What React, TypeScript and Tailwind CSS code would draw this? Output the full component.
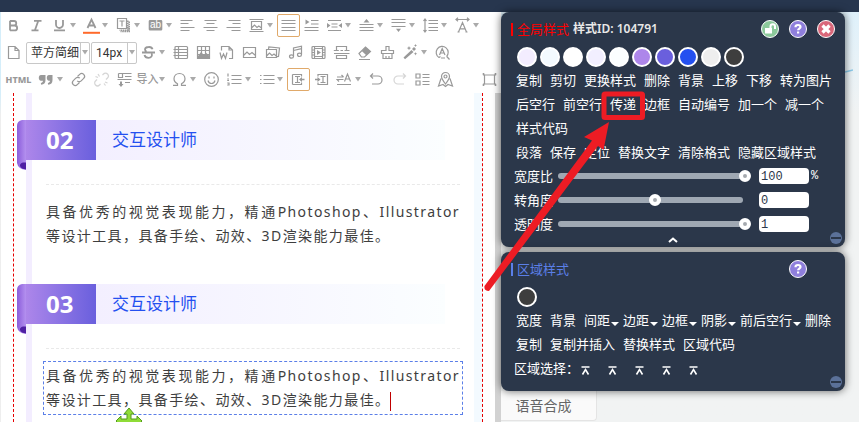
import { useState, type ReactNode } from "react";
import { clsx } from "clsx";

interface Tool {
  label: string;
  d?: string;
  fill?: string;
  text?: string;
  node?: ReactNode;
  menu?: boolean;
  active?: boolean;
  dim?: boolean;
  bold?: boolean;
  wide?: boolean;
  end?: boolean;
}

const picture = "M2.5 3.5h12v10h-12zM2.5 11.5l3.5-3.5 2.5 2.5 2.5-2 3.5 3";

const rowOne: Tool[] = [
  {
    label: "加粗",
    bold: true,
    d: "M5 3.8v9.7M5 4h4a2.2 2.2 0 0 1 0 4.5H5h4.7a2.4 2.4 0 0 1 0 4.9H5",
  },
  { label: "斜体", bold: true, d: "M6 3.8h7.5M3.5 13.3h7M10.2 4l-3.2 9" },
  {
    label: "下划线",
    bold: true,
    menu: true,
    d: "M5 3v4.5a3.5 3.5 0 0 0 7 0V3M3 13.3h11",
  },
  {
    label: "字体颜色",
    bold: true,
    menu: true,
    d: "M4.5 11l4-8.5 4 8.5M6 8.5h5",
    node: <path d="M0 15.8h17" stroke="#ff6a2b" strokeWidth="2" />,
  },
  {
    label: "文字阴影",
    menu: true,
    d: "M2.5 1.5h9v10h-9zM4.5 4h5M7 4v5.5",
    node: (
      <path
        d="M12.8 3.5v9.7H4.5M14.2 4.5v10H5.5"
        strokeWidth="1.6"
        strokeDasharray="1.6 .6"
      />
    ),
  },
  {
    label: "背景色",
    menu: true,
    fill: "M3 3h11a1.3 1.3 0 0 1 1.3 1.3v8a1.3 1.3 0 0 1-1.3 1.3H3a1.3 1.3 0 0 1-1.3-1.3v-8A1.3 1.3 0 0 1 3 3z",
    node: (
      <text
        x="8.5"
        y="11.3"
        textAnchor="middle"
        fontSize="10"
        fill="#fff"
        stroke="none"
        fontFamily="Liberation Sans"
      >
        ab
      </text>
    ),
  },
  { label: "左对齐", d: "M1.5 3.5h12M1.5 6.5h8M1.5 10.5h14M1.5 13.5h9" },
  { label: "居中", d: "M2.5 3.5h12M4.5 6.5h8M1.5 10.5h14M4.5 13.5h8" },
  { label: "右对齐", d: "M3.5 3.5h12M7.5 6.5h8M1.5 10.5h14M6.5 13.5h9" },
  {
    label: "图片对齐",
    menu: true,
    d: "M1.5 2.5h14M1.5 14.5h14M3.5 4.5h10v8h-10zM3.5 11l3-3 2.5 2.5 1.8-1.5 2.7 2",
  },
  {
    label: "两端对齐",
    active: true,
    d: "M1.5 3.5h14M1.5 6.5h14M1.5 10.5h14M1.5 13.5h14",
  },
  {
    label: "首行缩进",
    d: "M8 3.5h7.5M8 7h7.5M1.5 10.5h14M1.5 13.5h14",
    fill: "M2.5 2.5l4 2.5-4 2.5z",
  },
  {
    label: "两侧缩进",
    menu: true,
    d: "M2 3.5h13M5.5 7h6M5.5 10h6M2 13.5h13",
    fill: "M1 6l3.5 2.5L1 11zM16 6l-3.5 2.5L16 11z",
  },
  {
    label: "段前距",
    menu: true,
    d: "M1.5 7.5h14M1.5 10.5h14M1.5 13.5h14",
    fill: "M8.5 2l3 3.5h-6z",
  },
  {
    label: "段后距",
    menu: true,
    d: "M1.5 2.5h14M1.5 5.5h14M1.5 9.5h14",
    fill: "M8.5 15l2.5-3.2H6z",
  },
  {
    label: "行间距",
    menu: true,
    d: "M3 2.5v12M1.5 4L3 2l1.5 2M1.5 13L3 15l1.5-2M6.5 3.5h9.5M6.5 6.5h9.5M6.5 10.5h9.5M6.5 13.5h9.5",
  },
  {
    label: "字间距",
    menu: true,
    d: "M2 2.5h13M4 .8L2 2.5l2 1.7M13 .8l2 1.7-2 1.7M4.5 15l4-9.5 4 9.5M6 11.8h5M3.5 15h2M11.5 15h2",
  },
];

const rowTwo: Tool[] = [
  {
    label: "删除线",
    bold: true,
    menu: true,
    d: "M12.5 5.3A3.6 2.8 0 0 0 8.6 3C6 3 5 4.4 5 5.6c0 1 .6 1.7 1.6 2.1M2 8.5h13M11.5 9.5c1.5 2.3-.5 4.3-3 4.3-2.2 0-3.6-1-4-2.8",
  },
  {
    label: "表格",
    d: "M4 2.5h10.500a1 1 0 0 1 1 1v10a1 1 0 0 1-1 1H4a1 1 0 0 1-1-1v-10a1 1 0 0 1 1-1zM1.500 5.500h14M1.500 8.500h14M1.500 11.500h14M6.500 2.500v12",
  },
  {
    label: "数据图表",
    d: "M2.5 2.5h12v12h-12zM2.5 6.5h12M2.5 10.5h12M6.5 2.5v12M10.5 2.5v12",
    fill: "M3 14.5v-2.500l3-4 3 3 2.500-2 3 3v2.500z",
  },
  {
    label: "导入文档",
    d: "M3.5 6.5v-4h7.5l3.5 3.5v8.5H11M11 2.5V6h3.5M2 8.5l1.5 6 2-4.5 2 4.5 1.5-6",
  },
  { label: "图片", d: picture },
  {
    label: "多图",
    d: "M2.5 5.5h10v8h-10zM2.5 12l3-3 2.5 2.5 2-1.5 2.5 2.2M4.5 5.5l.3-2.5 10.7 1-1 8.5-2 .2",
  },
  {
    label: "音乐",
    d: "M6.5 12.5V4l8-1.8v8.3M6.5 6.5l8-1.8M6.5 12.5a2 1.7 0 1 1-4 0 2 1.7 0 0 1 4 0zM14.5 10.8a2 1.7 0 1 1-4 0 2 1.7 0 0 1 4 0z",
  },
  {
    label: "视频",
    d: "M3 2.5h11a1 1 0 0 1 1 1v10a1 1 0 0 1-1 1H3a1 1 0 0 1-1-1v-10a1 1 0 0 1 1-1zM4.5 2.5v12M12.5 2.5v12M4.5 4.5h8M4.5 12.5h8M2 6h2.5M2 8.5h2.5M2 11h2.5M12.5 6H15M12.5 8.5H15M12.5 11H15",
    fill: "M7 6l4 2.5L7 11z",
  },
  {
    label: "分隔线",
    d: "M3.5 6V2.5h10V6M.8 6.5h5M7.500 6.500h2.500M11.500 6.500h5M1 9.500h15.500M3.500 14.500v-3h10v3z",
  },
  {
    label: "橡皮擦",
    d: "M3 9.5l6.5-6.5 5 4.5-6 5.5H5.5zM3 15.5h11",
    fill: "M5.8 7L9.5 3l5 4.5-4 4z",
  },
  {
    label: "格式刷",
    d: "M7 6.5V2.5h3v4h4.5v3h-12v-3zM4 9.5v5h9v-5M7 14.5v-2.5M10 14.5v-2.5",
  },
  {
    label: "魔法棒",
    menu: true,
    fill: "M1.5 13.5L9.5 6l2 2-8.5 7.3zM10 5l2-2 2 2-2 2zM7 2l.7 1.5L9.2 4l-1.5.7L7 6.2l-.7-1.5L4.8 4l1.5-.5zM13.5 8l.5 1.3 1.3.5-1.3.5-.5 1.3-.5-1.3-1.3-.5 1.3-.5zM13.5 0l.5 1 1 .5-1 .5-.5 1-.5-1-1-.5 1-.5z",
  },
  {
    label: "查找替换",
    d: "M5 13.5A6 6 0 1 1 12.5 12.6M12.8 12.5l2.7 3M5 13.5l1.5-1M7 14h4M5.5 11L8.2 4.5 11 11M6.5 9h3.5",
  },
];

const rowThree: Tool[] = [
  { label: "HTML", text: "HTML", wide: true },
  {
    label: "引用",
    menu: true,
    fill: "M3 4h4.5v5c0 3-1.5 4.5-4.3 4.7l-.4-1.7c1.3-.3 2-.8 2.2-2.2H3c-1.5 0-2.2-1.4-2.2-3S1.5 4 3 4zM11 4h3.5v5c0 3-1.5 4.5-4.3 4.7l-.4-1.7c1.3-.3 2-.8 2.2-2.2H11c-1.5 0-2.2-1.4-2.2-3S9.5 4 11 4z",
  },
  {
    label: "链接",
    d: "M7.5 5.5l2.2-2.2a2.8 2.8 0 0 1 4 4l-2.5 2.5a2.8 2.8 0 0 1-4 0M9.5 11.5l-2.2 2.2a2.8 2.8 0 0 1-4-4l2.5-2.5a2.8 2.8 0 0 1 4 0",
  },
  {
    label: "取消链接",
    dim: true,
    d: "M9.5 4l1-1a2.8 2.8 0 0 1 4 4l-1.5 1.5M7.5 13l-1 1a2.8 2.8 0 0 1-4-4L4 8.5M5 3l1.5 2.5M2.5 5.5L5 6.5M12 11l2.5 1M11 12.5l1.5 2",
  },
  {
    label: "段落",
    d: "M2.500 2.500h13M2.500 2.500v4h4v-4M9 5.500h6.500M1.500 8.500h14M9 11.500h5",
    fill: "M5 16l-2.5-3H4v-2.5h2V13h1.5z",
  },
  { label: "导入", text: "导入", menu: true },
  {
    label: "特殊字符",
    menu: true,
    d: "M2 14.3h4.5v-1.5C4 11.5 3 10 3 7.8 3 4.5 5.4 2.5 8.5 2.5s5.5 2 5.5 5.3c0 2.2-1 3.7-3.5 5v1.5H15",
  },
  {
    label: "表情",
    d: "M15.3 8.5a6.8 6.8 0 1 1-13.6 0 6.8 6.8 0 0 1 13.6 0zM5 9.5c.5 2 1.7 3 3.5 3s3-1 3.5-3M6 5.5v2M11 5.5v2",
  },
  {
    label: "有序列表",
    menu: true,
    d: "M5.5 4.5h10M5.5 8.5h10M5.5 12.5h10M2 2.5v3M1.2 8h1.8M1.2 9.5h1.8M1.2 12h1.8v2H1.2",
  },
  {
    label: "无序列表",
    menu: true,
    d: "M5.5 4.5h11M5.5 8.5h11M5.5 12.5h11M2 4.5h1.5M2 8.5h1.5M2 12.5h1.5",
  },
  {
    label: "左侧插入",
    active: true,
    d: "M2.5 3.5v10M2.5 3.5h9v2M2.5 13.5h9v-2M5 5.5h5M5 11.5h5M7.5 5.500v6",
    fill: "M9 8.500l3-2.500v1.700h2.500v1.600H12V11z",
  },
  {
    label: "右侧插入",
    d: "M14.5 3v11M5 5.5v-2h9.500M5 11.500v2h9.500M7.500 5.500h5M7.500 11.500h5M10 5.500v6",
    fill: "M7.5 8.5L4.5 6v1.7H2v1.6h2.5V11z",
  },
  {
    label: "样式转换",
    menu: true,
    d: "M1 6h6.5M5.5 4l2 2M7.5 8.5H1l2 2M8.5 10.5l3-7.5 3 7.5M9.8 8h3.5M1 13.5h14",
  },
  {
    label: "撤销",
    d: "M5 2.5L2.5 5 5 7.5M2.5 5h7.5a4 4 0 0 1 0 8H4",
  },
  {
    label: "重做",
    dim: true,
    d: "M12 2.5L14.5 5 12 7.5M14.5 5H7a4 4 0 0 0 0 8h6",
  },
  {
    label: "目录",
    d: "M2 3h4v4H2zM2 10h4v4H2zM8.5 3.5h7M8.5 6.5h7M8.5 10.5h7M8.5 13.5h7",
  },
  {
    label: "地图",
    d: "M8.5 13C6 9.8 4.5 7.8 4.5 5.5a4 4 0 0 1 8 0c0 2.3-1.5 4.3-4 7.5zM10 5.5a1.5 1.5 0 1 1-3 0 1.5 1.5 0 0 1 3 0zM4 7.5l-2.5 7.5 4.5-1.5 2.5 2 2.5-2 4.5 1.5L13 7.5",
  },
  {
    label: "全屏",
    end: true,
    d: "M3.5 4h10v9h-10zM1.5 3h2M2.5 2v2.5M13.5 3h2M14.5 2v2.5M1.5 14h2M2.5 12.5V15M13.5 14h2M14.5 12.5V15",
  },
];

const Triangle = () => (
  <svg width="7" height="5" viewBox="0 0 7 5" aria-hidden="true">
    <path d="M0 0h6L3 4.500z" fill="#aaa" />
  </svg>
);

const ToolButton = ({ tool }: { tool: Tool }) => (
  <button
    type="button"
    aria-label={tool.label}
    className={clsx(
      "flex h-[23px] shrink-0 items-center text-[#999]",
      tool.menu && "w-8",
      tool.wide && "w-[33px] justify-center",
      !tool.menu && !tool.wide && "w-[23px] justify-center",
      tool.active && "rounded-xs outline outline-[#e0a96a] -outline-offset-1",
      tool.dim && "opacity-40",
      tool.end && "ml-auto",
    )}
  >
    {tool.text ? (
      <span
        className={clsx(
          "text-center",
          tool.wide
            ? "text-[9px] font-extrabold"
            : "w-[23px] text-[11px] font-medium",
        )}
      >
        {tool.text}
      </span>
    ) : (
      <svg
        className={clsx("shrink-0", tool.menu && "mr-0.5 ml-[3px]")}
        width="17"
        height="17"
        viewBox="0 0 17 17"
        fill="none"
        stroke="currentColor"
        strokeWidth={tool.bold ? 1.8 : 1.2}
        aria-hidden="true"
      >
        {tool.fill && <path d={tool.fill} fill="currentColor" stroke="none" />}
        {tool.d && <path d={tool.d} />}
        {tool.node}
      </svg>
    )}
    {tool.menu && <Triangle />}
  </button>
);

interface PickerProps {
  label: string;
  value: string;
  className: string;
}

const Picker = ({ label, value, className }: PickerProps) => (
  <label
    className={clsx(
      "flex h-[22px] shrink-0 items-center rounded-xs border border-[#c8c8c8]",
      className,
    )}
  >
    <span className="sr-only">{label}</span>
    <select className="h-5 min-w-0 flex-1 appearance-none pl-1 font-['Roboto','Noto_Sans_CJK_SC',sans-serif] text-xs leading-5 text-[#333]">
      <option>{value}</option>
    </select>
    <span className="flex h-full w-[9px] items-center justify-center border-l border-[#c8c8c8]">
      <Triangle />
    </span>
  </label>
);

const Toolbar = () => (
  <div className="bg-white pl-px">
    <div className="flex h-[27px] items-center">
      {rowOne.map((tool) => (
        <ToolButton key={tool.label} tool={tool} />
      ))}
    </div>
    <div className="flex h-[27px] items-center">
      <ToolButton
        tool={{ label: "新建", d: "M3.5 2.5h6.5l4 4v8H3.5zM10 2.5v4h4" }}
      />
      <Picker label="字体" value="苹方简细" className="ml-px w-16" />
      <Picker label="字号" value="14px" className="ml-px w-[46px]" />
      {rowTwo.map((tool) => (
        <ToolButton key={tool.label} tool={tool} />
      ))}
    </div>
    <div className="flex h-[27px] items-center">
      {rowThree.map((tool) => (
        <ToolButton key={tool.label} tool={tool} />
      ))}
    </div>
  </div>
);

const MoveHandle = () => (
  <svg
    className="absolute top-[45px] left-[71px]"
    width="28"
    height="28"
    viewBox="0 0 28 28"
    aria-hidden="true"
  >
    <path
      d="M14 1l5 6h-3v5h6V9l5 5-5 5v-3h-6v6h3l-5 5-5-5h3v-6H6v3l-5-5 5-5v3h6V7H9z"
      fill="#8fdc38"
      stroke="#549a1c"
    />
  </svg>
);

interface SectionProps {
  id: string;
  no: string;
  title: string;
  selected?: boolean;
}

const Section = ({ id, no, title, selected }: SectionProps) => (
  <section>
    <div className="relative mr-[29px] -ml-1.5 flex h-10">
      <svg
        className="absolute top-0 -left-[9px]"
        width="9"
        height="50"
        viewBox="0 0 9 50"
        aria-hidden="true"
      >
        <defs>
          <linearGradient id={id}>
            <stop offset="0" stopColor="#8b5cdb" />
            <stop offset="1" stopColor="#b491ef" />
          </linearGradient>
        </defs>
        <path d="M9 0H5Q0 1 0 6v37q1 6 9 7z" fill={`url(#${id})`} />
        <path d="M9 42.5H6q-3.5 1-3 3.5 1 3 6 3.5z" fill="#4f1fa3" />
      </svg>
      <div className="flex w-[70px] items-center bg-linear-to-r from-[#ad86ea] to-[#6a5fdd] pl-5 text-2xl font-bold text-white">
        {no}
      </div>
      <h2 className="flex flex-1 items-center bg-linear-to-r from-[#f3efff] to-[#fbfeff] pl-4 text-[17px] text-[#2450f0]">
        {title}
      </h2>
    </div>
    <hr className="mx-3.5 mt-6 border-dashed border-[#e9e9e9]" />
    <div
      className={clsx(
        "relative mx-[11px] mt-3 border border-dashed p-0.5",
        selected ? "border-[#5b7fe8]" : "border-transparent",
      )}
    >
      <p className="text-sm leading-6 tracking-widest text-[#3e3e3e]">
        <span className="block [text-align-last:justify]">
          具备优秀的视觉表现能力，精通Photoshop、Illustrator
        </span>
        等设计工具，具备手绘、动效、3D渲染能力最佳。
        {selected && (
          <span className="inline-block h-[19px] w-px bg-[#c00000] align-middle" />
        )}
      </p>
      {selected && <MoveHandle />}
    </div>
  </section>
);

const swatches = [
  "bg-[#f3edff]",
  "bg-[#f3faff]",
  "bg-white",
  "bg-[#f2efff]",
  "bg-[#fbfeff]",
  "bg-[#ad86ea]",
  "bg-[#6a5fdd]",
  "bg-[#2450f0]",
  "bg-[#eeeeee]",
  "bg-[#3e3e3e]",
];

const Swatch = ({ color }: { color: string }) => (
  <button
    type="button"
    aria-label="颜色"
    className={clsx("size-5 rounded-full border-2 border-white", color)}
  />
);

interface RoundButtonProps {
  label: string;
  color: string;
  children: ReactNode;
}

const RoundButton = ({ label, color, children }: RoundButtonProps) => (
  <button
    type="button"
    aria-label={label}
    className={clsx(
      "flex size-[18px] items-center justify-center rounded-full border border-white text-white",
      color,
    )}
  >
    <svg
      width="16"
      height="16"
      viewBox="0 0 16 16"
      fill="none"
      stroke="currentColor"
      aria-hidden="true"
    >
      {children}
    </svg>
  </button>
);

const HelpButton = () => (
  <RoundButton label="帮助" color="bg-[#8f7fdc]">
    <path
      d="M5.5 6.2C5.5 4.5 6.6 4 8 4s2.5.7 2.5 2c0 1.6-2.4 1.6-2.4 3.2"
      strokeWidth="2.2"
    />
    <path d="M7 10.5h2.2v2H7z" fill="currentColor" stroke="none" />
  </RoundButton>
);

const Panel = ({ children }: { children: ReactNode }) => (
  <section className="rounded-lg bg-[#2b374a] text-[13px] leading-6 text-white shadow-[0_0_8px_rgba(0,0,0,0.6)]">
    {children}
  </section>
);

const PanelFooter = ({ collapsible }: { collapsible?: boolean }) => (
  <div className="relative flex h-[11px] items-center justify-center">
    {collapsible && (
      <button
        type="button"
        aria-label="收起"
        className="flex h-[11px] items-start"
      >
        <svg width="10" height="8" viewBox="0 0 10 8" aria-hidden="true">
          <path d="M1 6l4-3.500L9 6" fill="none" stroke="#fff" strokeWidth="2" />
        </svg>
      </button>
    )}
    <button
      type="button"
      aria-label="最小化"
      className="absolute right-[3px] bottom-[3px] flex size-3 items-center justify-center rounded-full bg-[#5b7199]"
    >
      <span className="h-0.5 w-2.5 bg-[#2b374a]" />
    </button>
  </div>
);

const Actions = ({ items }: { items: string[] }) => (
  <div className="flex flex-wrap gap-x-2 pr-2 pl-[15px]">
    {items.map((item) => (
      <button key={item} type="button" className="h-6">
        {item}
      </button>
    ))}
  </div>
);

interface SliderProps {
  id: string;
  label: string;
  min: number;
  max: number;
  step: number;
  initial: number;
  unit?: string;
}

const Slider = ({ id, label, min, max, step, initial, unit }: SliderProps) => {
  const [value, setValue] = useState(initial);

  return (
    <div className="flex h-6 items-center pl-[13px]">
      <label htmlFor={id} className="w-11 shrink-0">
        {label}
      </label>
      <div className="flex h-1.5 w-[185px] items-center rounded-full bg-[#9fa8b3]">
        <input
          type="range"
          aria-label={label}
          min={min}
          max={max}
          step={step}
          value={value}
          onChange={(e) => setValue(Number(e.target.value))}
          className="h-3 w-[193px] shrink-0 appearance-none bg-transparent [&::-webkit-slider-thumb]:size-3 [&::-webkit-slider-thumb]:appearance-none [&::-webkit-slider-thumb]:rounded-full [&::-webkit-slider-thumb]:border-4 [&::-webkit-slider-thumb]:border-white [&::-webkit-slider-thumb]:bg-[#a5a9ae]"
        />
      </div>
      <input
        id={id}
        type="text"
        value={value}
        onChange={(e) => setValue(Number(e.target.value) || 0)}
        className="ml-4 h-4 w-[50px] rounded bg-white px-0.5 pt-px font-['Liberation_Mono',monospace] text-xs text-[#2b374a]"
      />
      {unit && (
        <span className="ml-0.5 font-['Liberation_Mono',monospace] text-xs">
          {unit}
        </span>
      )}
    </div>
  );
};

const GlobalPanel = () => (
  <Panel>
    <div className="flex h-[34px] items-center px-2.5">
      <span className="mr-1 h-[13px] w-0.5 bg-[#ff0000]" />
      <h3 className="text-[#ff0000]">全局样式</h3>
      <span className="ml-1 text-xs font-semibold text-[#e8e8e8]">
        样式ID: 104791
      </span>
      <div className="ml-auto flex gap-2.5">
        <RoundButton label="解锁" color="bg-[#8cc99b]">
          <path d="M3 7h7v5.5H3z" fill="currentColor" stroke="none" />
          <path d="M8.5 7V5.5a2.2 2.2 0 0 1 4.5 0V8" strokeWidth="2" />
        </RoundButton>
        <HelpButton />
        <RoundButton label="关闭" color="bg-[#d9677a]">
          <path d="M4.5 4.5l7 7M11.5 4.5l-7 7" strokeWidth="3.2" />
        </RoundButton>
      </div>
    </div>
    <div className="flex h-[22px] items-center gap-[3px] pl-4">
      {swatches.map((color) => (
        <Swatch key={color} color={color} />
      ))}
    </div>
    <Actions
      items={[
        "复制",
        "剪切",
        "更换样式",
        "删除",
        "背景",
        "上移",
        "下移",
        "转为图片",
        "后空行",
        "前空行",
        "传递",
        "边框",
        "自动编号",
        "加一个",
        "减一个",
        "样式代码",
      ]}
    />
    <Actions
      items={["段落", "保存", "定位", "替换文字", "清除格式", "隐藏区域样式"]}
    />
    <Slider
      id="width"
      label="宽度比"
      min={0}
      max={100}
      step={1}
      initial={100}
      unit="%"
    />
    <Slider
      id="rotate"
      label="转角度"
      min={-180}
      max={180}
      step={1}
      initial={0}
    />
    <Slider
      id="opacity"
      label="透明度"
      min={0}
      max={1}
      step={0.1}
      initial={1}
    />
    <PanelFooter collapsible />
  </Panel>
);

const areaActions = [
  { name: "宽度" },
  { name: "背景" },
  { name: "间距", menu: true },
  { name: "边距", menu: true },
  { name: "边框", menu: true },
  { name: "阴影", menu: true },
  { name: "前后空行", menu: true },
  { name: "删除" },
];

const AreaPanel = () => (
  <Panel>
    <div className="flex h-[34px] items-center pr-[38px] pl-2.5">
      <span className="mr-1 h-[13px] w-0.5 bg-[#5b7fe8]" />
      <h3 className="text-[#5b7fe8]">区域样式</h3>
      <div className="ml-auto">
        <HelpButton />
      </div>
    </div>
    <div className="flex h-[22px] items-center pl-4">
      <Swatch color="bg-[#3e3e3e]" />
    </div>
    <div className="flex pl-[15px]">
      {areaActions.map(({ name, menu }) => (
        <button
          key={name}
          type="button"
          className={clsx("flex h-6 items-center", menu ? "mr-1" : "mr-2")}
        >
          {name}
          {menu && (
            <svg
              className="mt-2 ml-px"
              width="8"
              height="4"
              viewBox="0 0 8 4"
              aria-hidden="true"
            >
              <path d="M0 0h8L4 4z" fill="#fff" />
            </svg>
          )}
        </button>
      ))}
    </div>
    <Actions items={["复制", "复制并插入", "替换样式", "区域代码"]} />
    <div className="flex h-6 items-center pl-[13px]">
      <span className="w-[67px]">区域选择：</span>
      <div className="flex gap-[18px] pt-1">
        {[1, 2, 3, 4, 5].map((level) => (
          <button key={level} type="button" aria-label={`选择第${level}层`}>
            <svg width="9" height="9" viewBox="0 0 9 9" aria-hidden="true">
              <path
                d="M.5 1h8M1.5 8.5l3-5 3 5"
                fill="none"
                stroke="#fff"
                strokeWidth="1.6"
              />
            </svg>
          </button>
        ))}
      </div>
    </div>
    <PanelFooter />
  </Panel>
);

// red frame round 传递 and the arrow that leads to it
const Callout = () => (
  <svg
    className="pointer-events-none absolute top-0 -left-5"
    width="180"
    height="290"
    viewBox="0 0 180 290"
    aria-hidden="true"
  >
    <rect
      x="123"
      y="82"
      width="38.5"
      height="23.5"
      rx="1"
      fill="none"
      stroke="#ed1c24"
      strokeWidth="5"
    />
    <path
      d="M128 110l-25 15 8 3.5L3.5 274q-.8 5 4.5 5L117 134l5.500 4z"
      fill="#ed1c24"
    />
  </svg>
);

const App = () => {
  return (
    <div className="flex h-screen flex-col overflow-hidden bg-white font-['Noto_Sans','Noto_Sans_CJK_SC',sans-serif]">
      <header className="h-3 shrink-0 bg-[#27364e]" />
      <div className="flex min-h-0 flex-1">
        <div className="w-px shrink-0 bg-linear-to-b from-[#d5eefa] from-20% to-[#eeeeee] to-25%" />
        <main className="flex min-w-0 flex-1 flex-col">
          <Toolbar />
          <div className="flex flex-1">
            <div className="mx-3 min-w-0 flex-1 border-x border-dashed border-[#e60000] pl-3">
              <div className="h-full border-r-8 border-l-6 border-r-[#f3faff] border-l-[#f3edff] pt-[27px]">
                <Section id="curl-02" no="02" title="交互设计师" />
                <div className="mt-[33px]">
                  <Section id="curl-03" no="03" title="交互设计师" selected />
                </div>
              </div>
            </div>
            <div className="w-1.5 bg-[#d2d2d2]" />
          </div>
        </main>
        <aside className="relative w-[358px] shrink-0 bg-linear-to-b from-[#dff1fb] to-[#f1f3f3] to-25%">
          <svg
            className="absolute top-[57px] right-1.5"
            width="8"
            height="4"
            viewBox="0 0 8 4"
            aria-hidden="true"
          >
            <path d="M0 3l8-2" stroke="#8ccbea" strokeWidth="1.5" />
          </svg>
          <div className="relative mr-3.5 flex flex-col gap-[5px]">
            <GlobalPanel />
            <AreaPanel />
          </div>
          <button
            type="button"
            className="h-[30px] w-24 rounded-br border-r border-b border-[#e4e4e4] bg-[#fafafa] pr-2.5 text-sm text-[#666]"
          >
            语音合成
          </button>
          <Callout />
        </aside>
      </div>
    </div>
  );
};

export default App;
